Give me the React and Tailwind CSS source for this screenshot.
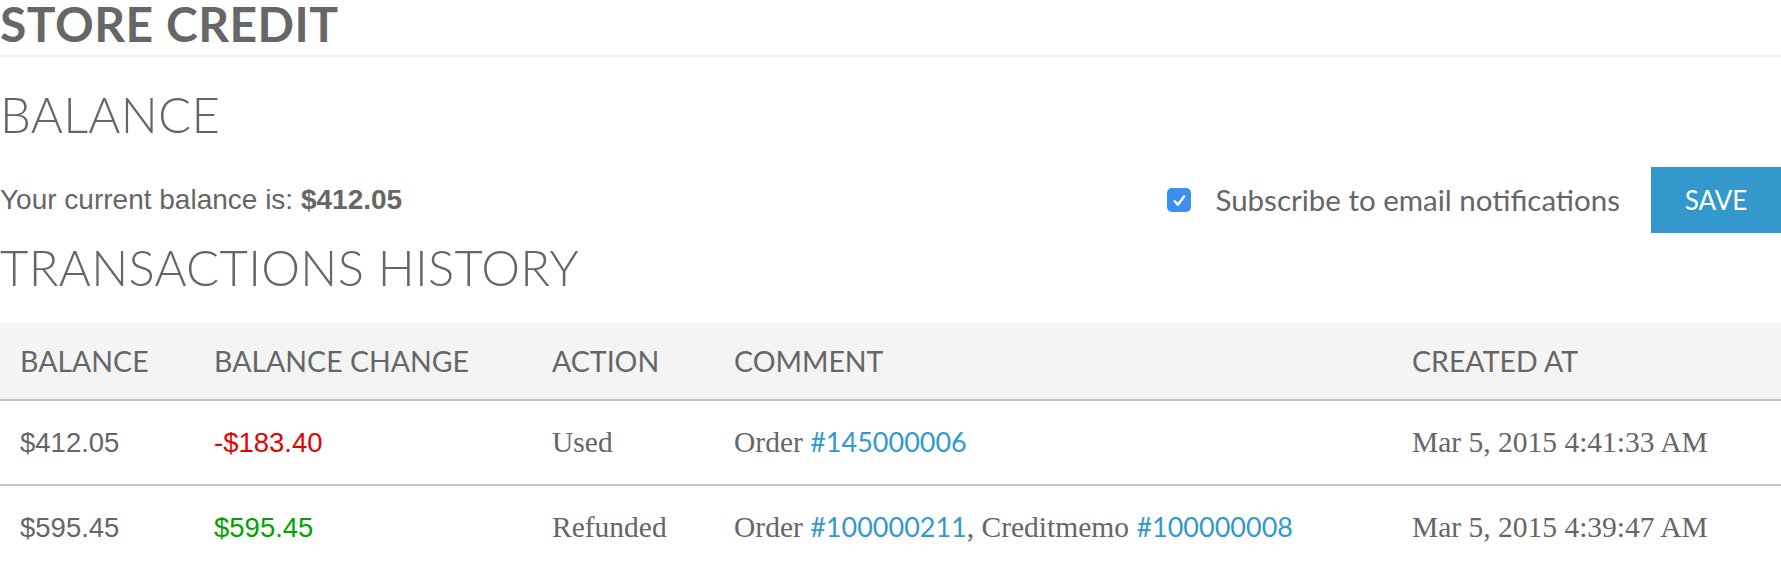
import { useState } from 'react';

const sans = "font-['Lato','Open_Sans',sans-serif]";
const arial = "font-['Liberation_Sans',Arial,sans-serif]";
const serif = "font-['Liberation_Serif','Times_New_Roman',serif]";

const transactions = [
  {
    balance: '$412.05',
    change: '-$183.40',
    positive: false,
    action: 'Used',
    comment: [['Order ', '#145000006']],
    createdAt: 'Mar 5, 2015 4:41:33 AM',
  },
  {
    balance: '$595.45',
    change: '$595.45',
    positive: true,
    action: 'Refunded',
    comment: [['Order ', '#100000211'], [', Creditmemo ', '#100000008']],
    createdAt: 'Mar 5, 2015 4:39:47 AM',
  },
];

const Checkbox = ({ checked, onChange }) => (
  <button
    type="button"
    onClick={() => onChange(!checked)}
    className={`flex h-[24px] w-[24px] items-center justify-center rounded-[5px] ${checked ? 'bg-[#3b8ff0]' : 'border border-gray-400 bg-white'}`}
  >
    {checked && (
      <svg viewBox="0 0 16 16" className="h-[19px] w-[19px]" fill="none" stroke="white" strokeWidth="2" strokeLinecap="round" strokeLinejoin="round">
        <path d="M4 8.6l2.6 2.9L12 4.5" />
      </svg>
    )}
  </button>
);

const App = () => {
  const [subscribed, setSubscribed] = useState(true);

  return (
    <div className={`w-[1781px] bg-white text-[#666] ${sans}`}>
      <h1 className="border-b-2 border-[#eeeeee] pt-[4px] pb-[11px] text-[48px] font-bold leading-[40px] tracking-[0.5px]">
        STORE CREDIT
      </h1>

      <h2 className="mt-[33px] text-[49px] font-light leading-[48px] tracking-[0.3px]">BALANCE</h2>

      <div className="mt-[29px] flex items-center justify-between">
        <p className={`text-[28px] ${arial}`}>
          Your current balance is: <b>$412.05</b>
        </p>
        <div className="flex items-center">
          <Checkbox checked={subscribed} onChange={setSubscribed} />
          <span className="ml-[24px] text-[29.5px]">Subscribe to email notifications</span>
          <button className="ml-[31px] h-[66px] w-[130px] bg-[#3399cc] text-[26px] text-white">SAVE</button>
        </div>
      </div>

      <h2 className="mt-[10px] text-[49px] font-light leading-[48px] tracking-[0.3px]">TRANSACTIONS HISTORY</h2>

      <table className="mt-[32px] w-full table-fixed border-collapse">
        <colgroup>
          <col className="w-[194px]" />
          <col className="w-[338px]" />
          <col className="w-[182px]" />
          <col className="w-[678px]" />
          <col />
        </colgroup>
        <thead>
          <tr className="h-[77px] border-b-2 border-[#c4c4c4] bg-[#f4f4f4] text-left text-[28.5px]">
            <th className="pl-[20px] font-normal">BALANCE</th>
            <th className="pl-[20px] font-normal">BALANCE CHANGE</th>
            <th className="pl-[20px] font-normal">ACTION</th>
            <th className="pl-[20px] font-normal">COMMENT</th>
            <th className="pl-[20px] font-normal">CREATED AT</th>
          </tr>
        </thead>
        <tbody>
          {transactions.map((t, idx) => (
            <tr key={`tx-${idx}`} className="h-[85px] border-b-2 border-[#c4c4c4]">
              <td className={`pl-[20px] text-[27.5px] ${arial}`}>{t.balance}</td>
              <td className={`pl-[20px] text-[27.5px] ${arial} ${t.positive ? 'text-[#00a300]' : 'text-[#e60000]'}`}>{t.change}</td>
              <td className={`pl-[20px] text-[29.5px] ${serif}`}>{t.action}</td>
              <td className={`pl-[20px] text-[29.5px] ${serif}`}>
                {t.comment.map(([label, link], i) => (
                  <span key={`c-${i}`}>
                    {label}
                    <a href="#" className={`text-[27px] text-[#3399cc] ${sans}`}>{link}</a>
                  </span>
                ))}
              </td>
              <td className={`pl-[20px] text-[29.5px] ${serif}`}>{t.createdAt}</td>
            </tr>
          ))}
        </tbody>
      </table>
    </div>
  );
};

export default App;
